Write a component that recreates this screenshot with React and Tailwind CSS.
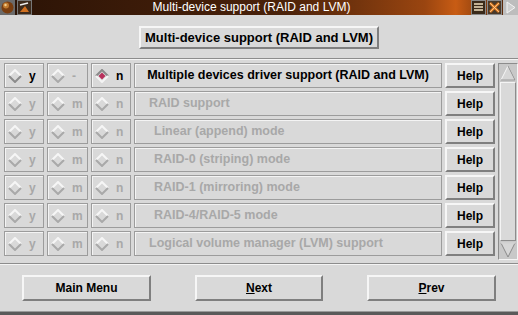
import React from "react";

const font = "font-['Liberation_Sans','Arial',sans-serif]";

const rows = [
  { m: "-", text: "Multiple devices driver support (RAID and LVM)", active: true, indent: "center" },
  { m: "m", text: "RAID support", indent: "pl-[14px]" },
  { m: "m", text: "Linear (append) mode", indent: "pl-[19px]" },
  { m: "m", text: "RAID-0 (striping) mode", indent: "pl-[19px]" },
  { m: "m", text: "RAID-1 (mirroring) mode", indent: "pl-[19px]" },
  { m: "m", text: "RAID-4/RAID-5 mode", indent: "pl-[19px]" },
  { m: "m", text: "Logical volume manager (LVM) support", indent: "pl-[14px]" },
];

const Diamond = ({ checked, faded }) => (
  <svg width="14" height="14" viewBox="0 0 14 14" className="shrink-0">
    {checked ? (
      <>
        <polyline points="1,7 7,1 13,7" fill="none" stroke="#8a8a8a" strokeWidth="2" />
        <polyline points="1,7 7,13 13,7" fill="none" stroke="#f4f4f4" strokeWidth="2" />
        <polygon points="7,3.5 10.5,7 7,10.5 3.5,7" fill="#b8305c" />
      </>
    ) : (
      <>
        <polyline points="1,7 7,1 13,7" fill="none" stroke="#f6f6f6" strokeWidth="2" />
        <polyline points="1,7 7,13 13,7" fill="none" stroke={faded ? "#a9a9a9" : "#8c8c8c"} strokeWidth="2" />
      </>
    )}
  </svg>
);

const Cell = ({ children, className = "" }) => (
  <div className={`h-[25px] border border-[#9c9c9c] shadow-[inset_1px_1px_0_#f4f4f4] flex items-center ${className}`}>
    {children}
  </div>
);

const Raised = ({ children, className = "" }) => (
  <div className={`border-2 border-t-[#f6f6f6] border-l-[#f6f6f6] border-b-[#7f7f7f] border-r-[#7f7f7f] bg-[#d9d9d9] flex items-center justify-center font-bold text-black ${className}`}>
    {children}
  </div>
);

const Choice = ({ letter, checked, active }) => (
  <Cell className="pl-[3px] gap-[7px]">
    <Diamond checked={checked} faded={!active} />
    <span className={`text-[12px] font-bold ${active ? "text-black" : "text-[#a8a8a8]"}`}>{letter}</span>
  </Cell>
);

export default function App() {
  return (
    <div className={`w-[518px] h-[315px] bg-[#d9d9d9] flex flex-col overflow-hidden ${font}`}>
      {/* title bar */}
      <div className="h-[15px] flex items-center bg-[linear-gradient(90deg,#2a1306_0%,#3a1a08_25%,#4a220a_55%,#9a4510_82%,#c85c14_88%,#3a1a07_100%)] shrink-0">
        <svg width="15" height="15" viewBox="0 0 15 15" className="shrink-0">
          <rect width="15" height="15" fill="#6b6b6b" />
          <circle cx="7.5" cy="7.5" r="6" fill="#7a3e10" />
          <circle cx="6" cy="5.5" r="3" fill="#c07a30" />
          <circle cx="5.5" cy="5" r="1.2" fill="#f3d090" />
        </svg>
        <svg width="15" height="15" viewBox="0 0 15 15" className="ml-[2px] shrink-0">
          <rect width="15" height="15" fill="#777" />
          <rect x="1" y="1" width="13" height="13" fill="#3c2a1c" />
          <path d="M3 12 L8 6 L12 12 Z" fill="#d07020" />
          <path d="M3 5 L11 3" stroke="#eee" strokeWidth="1.5" />
        </svg>
        <div className="flex-1 text-center text-white text-[12px] leading-[15px]">Multi-device support (RAID and LVM)</div>
        <svg width="15" height="15" viewBox="0 0 15 15" className="shrink-0">
          <rect width="15" height="15" fill="#8a8a8a" />
          <rect x="1" y="1" width="13" height="13" fill="#3a2a1a" />
          <path d="M3 4 H12 M3 7 H12 M3 10 H12" stroke="#f0e0c0" strokeWidth="1.5" />
        </svg>
        <svg width="15" height="15" viewBox="0 0 15 15" className="ml-[1px] shrink-0">
          <rect width="15" height="15" fill="#8a8a8a" />
          <rect x="1" y="1" width="13" height="13" fill="#4a3a2a" />
          <path d="M3 3 L12 12 M12 3 L3 12" stroke="#e07a20" strokeWidth="2.5" />
          <path d="M3 3 L12 12 M12 3 L3 12" stroke="#f5d0a0" strokeWidth="0.8" />
        </svg>
        <svg width="15" height="15" viewBox="0 0 15 15" className="ml-[1px] shrink-0">
          <rect width="15" height="15" fill="#bdbdbd" />
          <path d="M4 2 L12 7.5 L4 13 Z" fill="#d0d0d0" stroke="#f4f4f4" strokeWidth="1" />
        </svg>
      </div>

      {/* heading button */}
      <div className="flex justify-center pt-[11px] pb-[9px]">
        <Raised className="w-[240px] h-[23px] text-[13px]">Multi-device support (RAID and LVM)</Raised>
      </div>

      <div className="border-t border-t-[#8c8c8c] border-b border-b-[#f4f4f4]" />

      {/* option list */}
      <div className="flex pl-[4px] pt-[3px] h-[203px]">
        <div className="grid grid-cols-[40px_41px_40px_308px_50px] gap-x-[3px] gap-y-[3px] content-start">
          {rows.map((r, i) => (
            <React.Fragment key={i}>
              <Choice letter="y" active={r.active} />
              <Choice letter={r.m} active={false} />
              <Choice letter="n" active={r.active} checked={r.active} />
              <Cell className={`text-[12.5px] font-bold ${r.active ? "justify-center text-black" : `${r.indent} text-[#a8a8a8]`}`}>
                {r.text}
              </Cell>
              <Raised className="h-[25px] text-[12px]">Help</Raised>
            </React.Fragment>
          ))}
        </div>
        {/* scrollbar */}
        <div className="ml-[3px] w-[20px] h-[197px] border border-t-[#8c8c8c] border-l-[#8c8c8c] border-b-[#f4f4f4] border-r-[#f4f4f4] bg-[#c8c8c8] flex flex-col">
          <svg width="18" height="18" viewBox="0 0 18 18" className="shrink-0">
            <path d="M2 16 L9 2 L16 16 Z" fill="#d6d6d6" stroke="#f6f6f6" strokeWidth="1" />
            <path d="M2 16 H16 L9 2" fill="none" stroke="#8a8a8a" strokeWidth="1" />
          </svg>
          <div className="flex-1 mx-[1px] border border-t-[#f4f4f4] border-l-[#f4f4f4] border-b-[#8c8c8c] border-r-[#8c8c8c] bg-[#d9d9d9]" />
          <svg width="18" height="18" viewBox="0 0 18 18" className="shrink-0">
            <path d="M2 2 L9 16 L16 2 Z" fill="#d6d6d6" stroke="#8a8a8a" strokeWidth="1" />
            <path d="M2 2 H16" fill="none" stroke="#f6f6f6" strokeWidth="1" />
          </svg>
        </div>
      </div>

      <div className="border-t border-t-[#8c8c8c] border-b border-b-[#f4f4f4]" />

      {/* nav buttons */}
      <div className="flex justify-between px-[22px] pt-[10px]">
        <Raised className="w-[129px] h-[26px] text-[12px]">Main Menu</Raised>
        <Raised className="w-[128px] h-[26px] text-[12px]"><span className="underline">N</span>ext</Raised>
        <Raised className="w-[129px] h-[26px] text-[12px]"><span className="underline">P</span>rev</Raised>
      </div>

      <div className="mt-auto h-[4px] bg-[#5a5a5a] border-t border-t-[#9a9a9a]" />
    </div>
  );
}
